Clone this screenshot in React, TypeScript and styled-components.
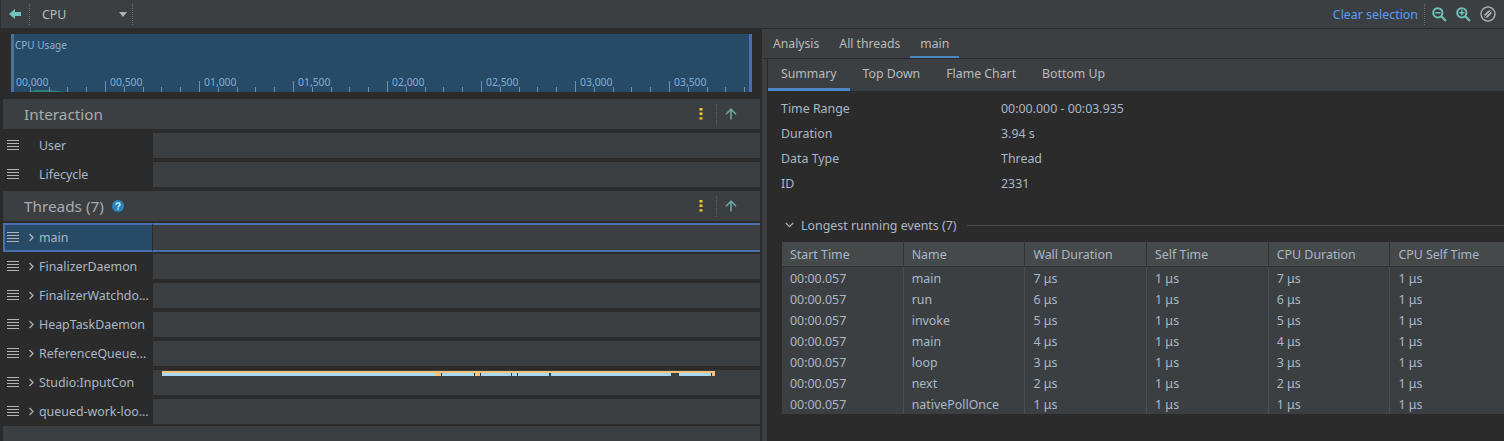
import React from 'react';
import styled, { createGlobalStyle } from 'styled-components';

const GlobalStyle = createGlobalStyle`
  html, body {
    margin: 0;
    padding: 0;
    height: 100%;
    overflow: hidden;
    background: #3c3f41;
  }
  #root {
    height: 100%;
  }
`;

const LABELS = ['00,000', '00,500', '01,000', '01,500', '02,000', '02,500', '03,000', '03,500'];
const TICK_COUNT = 40;

const INFO = [
  ['Time Range', '00:00.000 - 00:03.935'],
  ['Duration', '3.94 s'],
  ['Data Type', 'Thread'],
  ['ID', '2331'],
];

const COLUMNS = ['Start Time', 'Name', 'Wall Duration', 'Self Time', 'CPU Duration', 'CPU Self Time'];
const EVENTS = [
  ['main', '7 μs'],
  ['run', '6 μs'],
  ['invoke', '5 μs'],
  ['main', '4 μs'],
  ['loop', '3 μs'],
  ['next', '2 μs'],
  ['nativePollOnce', '1 μs'],
];

const THREADS = [
  'main',
  'FinalizerDaemon',
  'FinalizerWatchdo...',
  'HeapTaskDaemon',
  'ReferenceQueue...',
  'Studio:InputCon',
  'queued-work-loo...',
];

// [start, end, colour] in px from the start of the trace
const SLICES: [number, number, string][] = [
  [0, 273, '#a9d9f5'],
  [273, 280, '#f7c27e'],
  [280, 312, '#a9d9f5'],
  [312, 319, '#f7c27e'],
  [319, 509, '#a9d9f5'],
  [517, 549, '#a9d9f5'],
  [549, 553, '#f7c27e'],
  [279, 280, '#3a3a3a'],
  [312, 313, '#3a3a3a'],
  [318, 319, '#3a3a3a'],
  [349, 350, '#3c3f41'],
  [355, 356, '#3c3f41'],
  [387, 389, '#3c3f41'],
  [549, 550, '#3a3a3a'],
];

const Hamburger = () => (
  <svg width="12" height="11" viewBox="0 0 12 11">
    <path d="M0 .5h12M0 3.5h12M0 6.5h12M0 9.5h12" stroke="#b4b4b4" strokeWidth="1" />
  </svg>
);

const Chevron = () => (
  <svg width="7" height="9" viewBox="0 0 7 9">
    <path d="M1.5 1l3.5 3.5L1.5 8" fill="none" stroke="#afb1b3" strokeWidth="1.3" />
  </svg>
);

const KebabIcon = () => (
  <svg width="4" height="12" viewBox="0 0 4 12">
    <path d="M.5 0h3v2.4h-3zM.5 4.6h3V7h-3zM.5 9.2h3v2.4h-3z" fill="#f4c82d" />
  </svg>
);

const UpArrow = () => (
  <svg width="12" height="12" viewBox="0 0 12 12">
    <path d="M6 11.5V1.5M1 6.2l5-5 5 5" fill="none" stroke="#6aa6a0" strokeWidth="1.6" />
  </svg>
);

const BackArrow = () => (
  <svg width="12" height="10" viewBox="0 0 12 10">
    <path d="M0 5l6-5v3h6v4H6v3z" fill="#6fc7bb" />
  </svg>
);

const ZoomIcon = ({ plus }: { plus?: boolean }) => (
  <svg width="15" height="15" viewBox="0 0 15 15">
    <path d="M9 9l5 5" stroke="#6fc0b8" strokeWidth="2.2" />
    <circle cx="5.8" cy="5.8" r="4.6" fill="none" stroke="#6fc0b8" strokeWidth="2" />
    <path d={plus ? 'M3.3 5.8h5M5.8 3.3v5' : 'M3.3 5.8h5'} stroke="#6fc0b8" strokeWidth="1.6" />
  </svg>
);

const ResetIcon = () => (
  <svg width="16" height="16" viewBox="0 0 16 16">
    <circle cx="8" cy="8" r="7" fill="none" stroke="#a9abad" strokeWidth="1.5" />
    <path d="M4.6 8.2l3.6-3.6h3.2v3.2l-3.6 3.6H4.6z" fill="#a9abad" />
    <path d="M4.8 11.2l6.4-6.4" stroke="#3c3f41" strokeWidth="1" />
  </svg>
);

const HelpIcon = () => (
  <svg width="12" height="12" viewBox="0 0 12 12">
    <circle cx="6" cy="6" r="6" fill="#2a86c0" />
    <path d="M4.1 4.7c0-2.5 3.9-2.5 3.9-.2 0 1.5-2 1.4-2 3" fill="none" stroke="#e8f2f8" strokeWidth="1.3" />
    <rect x="5.3" y="8.3" width="1.4" height="1.4" fill="#e8f2f8" />
  </svg>
);

const SectionButtons = () => (
  <SectionActions>
    <KebabIcon />
    <ActionDivider />
    <UpArrow />
  </SectionActions>
);

const Timeline = () => (
  <TimelineTrack>
    {SLICES.map(([start, end, colour]) => (
      <Slice key={`${start}-${colour}`} $left={start} $width={end - start} $colour={colour} />
    ))}
  </TimelineTrack>
);

const App = () => {
  return (
    <Page>
      <GlobalStyle />
      <Toolbar>
        <BackButton>
          <BackArrow />
        </BackButton>
        <DottedDivider />
        <ProfilerSelect>
          <span>CPU</span>
          <Caret />
        </ProfilerSelect>
        <DottedDivider />
        <ToolbarSpacer />
        <ClearLink>Clear selection</ClearLink>
        <DottedDivider />
        <ToolbarIcons>
          <ZoomIcon />
          <ZoomIcon plus />
          <ResetIcon />
        </ToolbarIcons>
      </Toolbar>
      <Body>
        <LeftPane>
          <Overview>
            <UsageChart>
              <UsageLabel>CPU Usage</UsageLabel>
              <UsageWedge width="38" height="2" viewBox="0 0 38 2" preserveAspectRatio="none">
                <path d="M0 2L6 0h14l18 2z" fill="#2f7f7c" />
              </UsageWedge>
              <Ruler>
                {LABELS.map((t, i) => (
                  <RulerLabel key={t} style={{ left: `${i * 94}px` }}>
                    {t}
                  </RulerLabel>
                ))}
                {Array.from({ length: TICK_COUNT }, (_, i) => i)
                  .filter((i) => i > 0)
                  .map((i) => (
                    <RulerTick key={i} $major={i % 5 === 0} style={{ left: `${Math.round(i * 18.8 - 5)}px` }} />
                  ))}
              </Ruler>
            </UsageChart>
          </Overview>
          <SectionHeader>
            <SectionTitle>Interaction</SectionTitle>
            <SectionButtons />
          </SectionHeader>
          <RowGroup>
            <TrackRow>
              <RowName>
                <Hamburger />
                <RowLabel $indent>User</RowLabel>
              </RowName>
              <TrackBody />
            </TrackRow>
            <TrackRow>
              <RowName>
                <Hamburger />
                <RowLabel $indent>Lifecycle</RowLabel>
              </RowName>
              <TrackBody />
            </TrackRow>
          </RowGroup>
          <SectionHeader>
            <SectionTitle>
              Threads (7)
              <HelpIcon />
            </SectionTitle>
            <SectionButtons />
          </SectionHeader>
          <ThreadGroup>
            {THREADS.map((name, i) => (
              <TrackRow key={name} $selected={i === 0}>
                <RowName $selected={i === 0}>
                  <Hamburger />
                  <ChevronSlot>
                    <Chevron />
                  </ChevronSlot>
                  <RowLabel>{name}</RowLabel>
                </RowName>
                <TrackBody $selected={i === 0}>{name === 'Studio:InputCon' && <Timeline />}</TrackBody>
              </TrackRow>
            ))}
          </ThreadGroup>
          <PaneFiller />
        </LeftPane>
        <Splitter />
        <RightPane>
          <TabBar>
            <Tab>Analysis</Tab>
            <Tab>All threads</Tab>
            <Tab $active>main</Tab>
          </TabBar>
          <SubTabBar>
            <SubTab $active>Summary</SubTab>
            <SubTab>Top Down</SubTab>
            <SubTab>Flame Chart</SubTab>
            <SubTab>Bottom Up</SubTab>
          </SubTabBar>
          <Summary>
            <InfoList>
              {INFO.map(([k, v]) => (
                <React.Fragment key={k}>
                  <span>{k}</span>
                  <span>{v}</span>
                </React.Fragment>
              ))}
            </InfoList>
            <EventsHeading>
              <svg width="9" height="6" viewBox="0 0 9 6">
                <path d="M.8 1l3.7 3.7L8.2 1" fill="none" stroke="#afb1b3" strokeWidth="1.3" />
              </svg>
              <span>Longest running events (7)</span>
              <HeadingRule />
            </EventsHeading>
            <EventsTable>
              <HeaderRow>
                {COLUMNS.map((c) => (
                  <HeaderCell key={c}>{c}</HeaderCell>
                ))}
              </HeaderRow>
              {EVENTS.map(([name, duration], i) => (
                <EventRow key={i}>
                  <Cell>00:00.057</Cell>
                  <Cell>{name}</Cell>
                  <Cell>{duration}</Cell>
                  <Cell>1 μs</Cell>
                  <Cell>{duration}</Cell>
                  <Cell>1 μs</Cell>
                </EventRow>
              ))}
            </EventsTable>
          </Summary>
        </RightPane>
      </Body>
    </Page>
  );
};

const Page = styled.div`
  display: flex;
  flex-direction: column;
  width: 1504px;
  height: 441px;
  overflow: hidden;
  background: #3c3f41;
  color: #bbbbbb;
  font-family: 'Noto Sans', 'Open Sans', sans-serif;
  font-size: 12.4px;
`;

const Toolbar = styled.div`
  display: flex;
  flex: none;
  align-items: center;
  box-sizing: border-box;
  height: 29px;
  border-left: 1px solid #2f3133;
  border-bottom: 1px solid #2b2b2b;
  background: #3c3f41;
`;

const BackButton = styled.div`
  display: flex;
  width: 20px;
  padding-left: 8px;
`;

const DottedDivider = styled.div`
  width: 0;
  height: 21px;
  border-left: 1px dotted #6b6e70;
`;

const ProfilerSelect = styled.div`
  display: flex;
  align-items: center;
  justify-content: space-between;
  box-sizing: border-box;
  width: 102px;
  padding: 0 5px 0 12px;
`;

const Caret = styled.div`
  width: 0;
  height: 0;
  border-left: 4.5px solid transparent;
  border-right: 4.5px solid transparent;
  border-top: 5px solid #afb1b3;
`;

const ToolbarSpacer = styled.div`
  flex: 1;
`;

const ClearLink = styled.div`
  margin-right: 6px;
  color: #589df6;
`;

const ToolbarIcons = styled.div`
  display: flex;
  align-items: center;
  gap: 9px;
  margin: 0 8px 0 7px;
`;

const Body = styled.div`
  display: flex;
  flex: 1;
  min-height: 0;
`;

const LeftPane = styled.div`
  display: flex;
  flex: none;
  flex-direction: column;
  box-sizing: border-box;
  width: 762px;
  padding: 0 2px 0 3px;
  background: #2b2b2b;
`;

const Overview = styled.div`
  flex: none;
  box-sizing: border-box;
  height: 70px;
  padding: 5px 8px 0;
`;

const UsageChart = styled.div`
  position: relative;
  box-sizing: border-box;
  height: 58px;
  border-left: 3px solid #4b6eaf;
  border-right: 3px solid #4b6eaf;
  background: #274a67;
`;

const UsageLabel = styled.div`
  padding: 4px 0 0 1px;
  color: #8fb2d1;
  font-size: 10px;
  line-height: 14px;
`;

const UsageWedge = styled.svg`
  position: absolute;
  left: 15px;
  bottom: 0;
`;

const Ruler = styled.div`
  position: absolute;
  left: 2px;
  right: 0;
  bottom: 0;
  height: 15px;
`;

const RulerLabel = styled.span`
  position: absolute;
  top: 0;
  color: #83aed3;
  font-size: 10.4px;
  line-height: 11px;
`;

const RulerTick = styled.span<{ $major?: boolean }>`
  position: absolute;
  bottom: 0;
  width: 1px;
  height: ${({ $major }) => ($major ? '11px' : '5px')};
  background: #6f8ea8;
`;

const SectionHeader = styled.div`
  display: flex;
  flex: none;
  align-items: center;
  justify-content: space-between;
  box-sizing: border-box;
  height: 30px;
  padding: 0 23px 0 21px;
  background: #3c3f41;
`;

const SectionTitle = styled.div`
  display: flex;
  align-items: center;
  gap: 8px;
  color: #a9abad;
  font-size: 15.3px;
`;

const SectionActions = styled.div`
  display: flex;
  align-items: center;
`;

const ActionDivider = styled.div`
  width: 0;
  height: 21px;
  margin: 0 8px 0 13px;
  border-left: 1px dotted #5f6264;
`;

const RowGroup = styled.div`
  display: flex;
  flex: none;
  flex-direction: column;
  gap: 4px;
  padding: 4px 0;
`;

const ThreadGroup = styled.div`
  display: flex;
  flex: none;
  flex-direction: column;
  gap: 4px;
  padding: 2px 0;
`;

const TrackRow = styled.div<{ $selected?: boolean }>`
  display: flex;
  flex: none;
  height: ${({ $selected }) => ($selected ? '29px' : '25px')};
  margin-bottom: ${({ $selected }) => ($selected ? '-2px' : '0')};
`;

const RowName = styled.div<{ $selected?: boolean }>`
  display: flex;
  flex: none;
  align-items: center;
  box-sizing: border-box;
  width: 150px;
  padding-left: 4px;
  overflow: hidden;
  white-space: nowrap;
  ${({ $selected }) =>
    $selected
      ? `
    padding-left: 2px;
    background: #274a67;
    border: 2px solid #4b6eaf;
    border-right: 1px solid #2b2b2b;
  `
      : ''}
`;

const ChevronSlot = styled.div`
  display: flex;
  justify-content: center;
  width: 7px;
  margin-left: 9px;
`;

const RowLabel = styled.span<{ $indent?: boolean }>`
  margin-left: ${({ $indent }) => ($indent ? '20px' : '4px')};
  color: #a9b7c6;
`;

const TrackBody = styled.div<{ $selected?: boolean }>`
  position: relative;
  flex: 1;
  box-sizing: border-box;
  background: #3c3f41;
  ${({ $selected }) => ($selected ? 'border-top: 2px solid #4b6eaf; border-bottom: 2px solid #4b6eaf;' : '')}
`;

const TimelineTrack = styled.div`
  position: absolute;
  top: 1px;
  left: 9px;
  box-sizing: border-box;
  width: 553px;
  height: 5px;
  border-top: 2px solid #f2c277;
`;

const Slice = styled.div<{ $left: number; $width: number; $colour: string }>`
  position: absolute;
  top: 0;
  left: ${({ $left }) => $left}px;
  width: ${({ $width }) => $width}px;
  height: 3px;
  background: ${({ $colour }) => $colour};
`;

const PaneFiller = styled.div`
  flex: 1;
  background: #3c3f41;
`;

const Splitter = styled.div`
  flex: none;
  box-sizing: border-box;
  width: 6px;
  border-right: 1px solid #2b2b2b;
  background: #3c3f41;
`;

const RightPane = styled.div`
  display: flex;
  flex: 1;
  flex-direction: column;
  min-width: 0;
  background: #2b2b2b;
`;

const TabBar = styled.div`
  display: flex;
  flex: none;
  box-sizing: border-box;
  height: 30px;
  margin-left: -5px;
  background: #3c3f41;
  border-bottom: 1px solid #2b2b2b;
`;

const Tab = styled.div<{ $active?: boolean }>`
  display: flex;
  align-items: center;
  box-sizing: border-box;
  height: 29px;
  padding: ${({ $active }) => ($active ? '2px' : '0')} 10px 0;
  font-size: 12.2px;
  border-bottom: ${({ $active }) => ($active ? '2px solid #4a88c7' : '0')};
`;

const SubTabBar = styled.div`
  display: flex;
  flex: none;
  box-sizing: border-box;
  height: 32px;
  background: #3c3f41;
`;

const SubTab = styled.div<{ $active?: boolean }>`
  display: flex;
  align-items: center;
  box-sizing: border-box;
  height: 32px;
  padding: 0 13px;
  font-size: 12.3px;
  border-bottom: 3px solid ${({ $active }) => ($active ? '#4a88c7' : 'transparent')};
`;

const Summary = styled.div`
  flex: 1;
  min-height: 0;
  padding: 5px 0 0 14px;
`;

const InfoList = styled.div`
  display: grid;
  grid-template-columns: 220px 1fr;
  grid-auto-rows: 25px;
  align-items: center;
  margin-left: -1px;
  color: #a9b7c6;
`;

const EventsHeading = styled.div`
  display: flex;
  align-items: center;
  gap: 7px;
  height: 22px;
  margin: 18px 0 6px 3px;
  color: #a9b7c6;
`;

const HeadingRule = styled.div`
  flex: 1;
  height: 1px;
  margin-left: 3px;
  background: #4a4d4f;
`;

const EventsTable = styled.div`
  display: flex;
  flex-direction: column;
  width: 730px;
  background: #3c3f41;
`;

const HeaderRow = styled.div`
  display: grid;
  grid-template-columns: repeat(6, 121.7px);
  box-sizing: border-box;
  height: 25px;
  border-bottom: 1px solid #323232;
  background: #45494a;
`;

const HeaderCell = styled.div`
  display: flex;
  align-items: center;
  box-sizing: border-box;
  padding-left: 8px;
  border-right: 1px solid #323232;
  color: #a9b7c6;
`;

const EventRow = styled.div`
  display: grid;
  grid-template-columns: repeat(6, 121.7px);
  height: 21px;
`;

const Cell = styled.div`
  display: flex;
  align-items: center;
  box-sizing: border-box;
  padding: 1px 0 0 8px;
  border-right: 1px solid #4a4d4f;
  color: #a9b7c6;
`;

export default App;
